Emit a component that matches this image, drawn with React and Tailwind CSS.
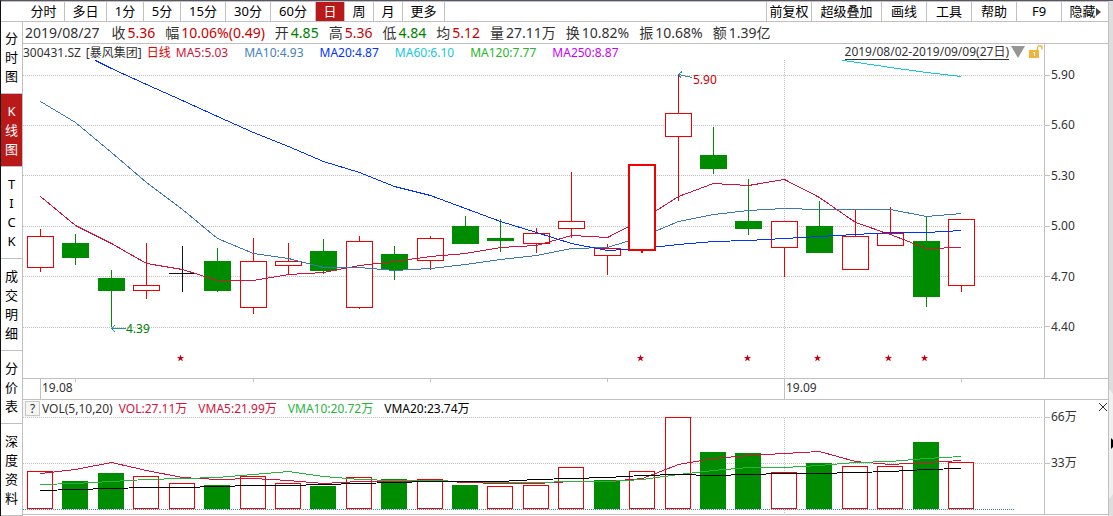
import clsx from 'clsx'

const periods = [
  { label: '分时', width: 'w-[42px]' },
  { label: '多日', width: 'w-[42px]' },
  { label: '1分', width: 'w-[37px]' },
  { label: '5分', width: 'w-[37px]' },
  { label: '15分', width: 'w-[45px]' },
  { label: '30分', width: 'w-[45px]' },
  { label: '60分', width: 'w-[45px]' },
  { label: '日', width: 'w-[29px]', active: true },
  { label: '周', width: 'w-[29px]' },
  { label: '月', width: 'w-[29px]' },
  { label: '更多', width: 'w-[42px]' },
]

const tools = [
  { label: '前复权', width: 'w-[45px]' },
  { label: '超级叠加', width: 'w-[70px]' },
  { label: '画线', width: 'w-[45px]' },
  { label: '工具', width: 'w-[45px]' },
  { label: '帮助', width: 'w-[45px]' },
  { label: 'F9', width: 'w-[45px]' },
  { label: '隐藏', width: 'w-[46px]', arrow: true },
]

const sideTabs = [
  { label: '分时图' },
  { label: 'K线图', active: true },
  { label: 'TICK' },
  { label: '成交明细' },
  { label: '分价表' },
  { label: '深度资料' },
]

const quote = [
  { label: '收', value: '5.36', color: 'text-[#c80000]' },
  { label: '幅', value: '10.06%(0.49)', color: 'text-[#c80000]' },
  { label: '开', value: '4.85', color: 'text-[#008000]' },
  { label: '高', value: '5.36', color: 'text-[#c80000]' },
  { label: '低', value: '4.84', color: 'text-[#008000]' },
  { label: '均', value: '5.12', color: 'text-[#c80000]' },
  { label: '量', value: '27.11万', color: 'text-[#333333]' },
  { label: '换', value: '10.82%', color: 'text-[#333333]' },
  { label: '振', value: '10.68%', color: 'text-[#333333]' },
  { label: '额', value: '1.39亿', color: 'text-[#333333]' },
]

const averages = [
  { label: 'MA5:5.03', color: 'text-[#d2143c]' },
  { label: 'MA10:4.93', color: 'text-[#4682b4]' },
  { label: 'MA20:4.87', color: 'text-[#0032ff]' },
  { label: 'MA60:6.10', color: 'text-[#14c8dc]' },
  { label: 'MA120:7.77', color: 'text-[#28b428]' },
  { label: 'MA250:8.87', color: 'text-[#c800ff]' },
]

const volumeAverages = [
  { label: 'VOL:27.11万', color: 'text-[#d2143c]' },
  { label: 'VMA5:21.99万', color: 'text-[#d2143c]' },
  { label: 'VMA10:20.72万', color: 'text-[#28b43c]' },
  { label: 'VMA20:23.74万', color: 'text-black' },
]

// [direction, high, body top, body bottom, low, volume top, volume direction if it differs]
const candles = [
  ['up', 229, 236, 268, 272, 471],
  ['down', 234, 243, 258, 265, 481],
  ['down', 270, 278, 291, 327, 473],
  ['up', 243, 285, 291, 299, 476],
  ['flat', 246, 273, 274, 292, 483],
  ['down', 248, 261, 291, 292, 485],
  ['up', 238, 261, 308, 314, 476],
  ['up', 243, 261, 266, 274, 483],
  ['down', 239, 251, 271, 274, 486],
  ['up', 236, 241, 308, 309, 477],
  ['down', 246, 254, 270, 280, 479],
  ['up', 236, 238, 261, 270, 479],
  ['down', 216, 226, 244, 244, 485],
  ['down', 219, 238, 241, 252, 486, 'up'],
  ['up', 228, 233, 244, 253, 485],
  ['up', 172, 221, 229, 238, 467],
  ['up', 244, 248, 256, 275, 480, 'down'],
  ['selected', 164, 164, 251, 253, 471],
  ['up', 75, 113, 137, 201, 417],
  ['down', 127, 155, 169, 174, 452],
  ['down', 179, 221, 229, 235, 453],
  ['up', 221, 221, 248, 277, 472],
  ['down', 201, 226, 253, 253, 463],
  ['up', 210, 236, 270, 270, 466],
  ['up', 207, 233, 246, 246, 466],
  ['down', 217, 241, 297, 307, 442],
  ['up', 219, 219, 286, 292, 462],
]

const dayX = (i) => Math.round(40 + i * 35.42)

const ma5 = [196, 225, 243, 263, 269, 280, 280, 274, 272, 265, 261, 256, 253, 247, 245, 235, 237, 219, 196, 183, 185, 179, 197, 222, 234, 248, 247]
const ma10 = [101, 122, 152, 182, 209, 238, 253, 258, 267, 267, 270, 268, 264, 259, 255, 248, 247, 236, 221, 214, 210, 208, 209, 209, 209, 216, 213]
const ma20 = [68, 84, 100, 116, 132, 146, 161, 172, 186, 195, 208, 221, 232, 243, 250, 248, 244, 241, 240, 238, 236, 234, 232, 232, 230]
const vma5 = [473, 469, 462, 470, 477, 479, 478, 480, 483, 481, 481, 480, 482, 483, 483, 481, 481, 478, 464, 458, 455, 453, 451, 461, 464, 462, 460]
const vma10 = [484, 483, 481, 479, 478, 477, 474, 471, 476, 479, 480, 480, 481, 482, 482, 481, 481, 479, 474, 470, 467, 467, 465, 462, 461, 458, 456]
const vma20 = [490, 489, 488, 487, 487, 486, 485, 485, 484, 483, 482, 481, 481, 481, 479, 478, 477, 475, 474, 475, 474, 473, 473, 472, 471, 469, 468]

const series = (values, first = 0) =>
  values.map((y, i) => `${dayX(i + first) + 0.5},${y + 0.5}`).join(' ')

const priceTicks = ['5.90', '5.60', '5.30', '5.00', '4.70', '4.40']
const priceGrid = [75, 125, 175, 226, 276, 327]
const stars = [180, 640, 747, 817, 888, 924]

function Candle({ x, data }) {
  const [kind, high, top, bottom, low] = data
  if (kind === 'flat') {
    return (
      <g fill="#111111">
        <rect x={x} y={high} width="1" height={low - high} />
        <rect x={x - 13} y={top} width="27" height="1" />
      </g>
    )
  }
  if (kind === 'down') {
    return (
      <g fill="#008c00">
        <rect x={x} y={high} width="1" height={low - high} />
        <rect x={x - 13} y={top} width="27" height={bottom - top} />
      </g>
    )
  }
  if (kind === 'selected') {
    return (
      <g>
        <rect x={x - 1} y={high} width="2" height={low - high} fill="#f00000" />
        <rect x={x - 13} y={top + 1} width="26" height={bottom - top - 2} fill="#ffffff" stroke="#f00000" strokeWidth="2" />
      </g>
    )
  }
  return (
    <g>
      <rect x={x} y={high} width="1" height={low - high} fill="#f00000" />
      <rect x={x - 12.5} y={top + 0.5} width="26" height={bottom - top - 1} fill="#ffffff" stroke="#f00000" />
    </g>
  )
}

function PriceChart() {
  return (
    <svg
      viewBox="23 60 1021 318"
      preserveAspectRatio="none"
      shapeRendering="crispEdges"
      className="block h-[318px] w-full"
      role="img"
      aria-label="日线"
    >
      <g stroke="#c0c0c0" strokeDasharray="1 1">
        {priceGrid.map((y) => (
          <line key={y} x1="23" x2="1042" y1={y + 0.5} y2={y + 0.5} />
        ))}
        <line x1="784.5" x2="784.5" y1="60" y2="378" />
      </g>
      {candles.map((data, i) => data[0] !== 'selected' && <Candle key={i} x={dayX(i)} data={data} />)}
      <g fill="none">
        <polyline points={series(ma5)} stroke="#d2143c" />
        <polyline points={series(ma10)} stroke="#3c78b4" />
        <polyline points={`95.5,60.5 ${series(ma20, 2)}`} stroke="#0032ff" />
        <polyline points="842.5,60.5 850.5,61.5 890.5,67.5 926.5,72.5 961.5,76.5" stroke="#14c8dc" />
      </g>
      <Candle x={642} data={candles[17]} />
      <g fill="none" stroke="#288caa">
        <path d="M692 77.5L678.5 74.5M682 71.5L678.5 74.5L681.5 78.5" />
        <path d="M126 328.5H111.5M115 325L111.5 328.5L115 332" />
      </g>
      <text x="693" y="84" fontSize="12" fill="#c80000">5.90</text>
      <text x="126" y="333" fontSize="12" fill="#008000">4.39</text>
      {stars.map((x) => (
        <polygon
          key={x}
          points="0,-3.6 .9,-1.1 3.6,-1.1 1.5,.6 2.3,3.2 0,1.7 -2.3,3.2 -1.5,.6 -3.6,-1.1 -.9,-1.1"
          transform={`translate(${x + 0.5} 358)`}
          fill="#c80014"
          shapeRendering="auto"
        />
      ))}
    </svg>
  )
}

function TimeAxis() {
  return (
    <svg
      viewBox="23 379 1021 20"
      preserveAspectRatio="none"
      shapeRendering="crispEdges"
      className="block h-5 min-w-0 flex-1"
      role="img"
      aria-label="日期"
    >
      <path d="M40.5 379V399M784.5 379V399M75.5 379V382M253.5 379V382M430.5 379V382M607.5 379V382M961.5 379V382" stroke="#c0c0c0" />
      <text x="42" y="392" fontSize="12" fill="#333333">19.08</text>
      <text x="786" y="392" fontSize="12" fill="#333333">19.09</text>
    </svg>
  )
}

function VolumeChart() {
  return (
    <svg
      viewBox="23 417 1021 97"
      preserveAspectRatio="none"
      shapeRendering="crispEdges"
      className="block h-[97px] w-full"
      role="img"
      aria-label="VOL"
    >
      <g stroke="#c0c0c0" strokeDasharray="1 1">
        <line x1="23" x2="1042" y1="417.5" y2="417.5" />
        <line x1="23" x2="1042" y1="463.5" y2="463.5" />
        <line x1="784.5" x2="784.5" y1="418" y2="514" />
        <line x1="23" x2="1014" y1="509.5" y2="509.5" stroke="#3c8ca0" />
      </g>
      {candles.map((data, i) => {
        const x = dayX(i) - 13
        const top = data[5]
        const down = (data[6] || data[0]) === 'down'
        return down ? (
          <rect key={i} x={x} y={top} width="26" height={509 - top} fill="#008c00" />
        ) : (
          <rect key={i} x={x + 0.5} y={top + 0.5} width="25" height={508 - top} fill="#ffffff" stroke="#f00000" />
        )
      })}
      <g fill="none">
        <polyline points={series(vma5)} stroke="#d2143c" />
        <polyline points={series(vma10)} stroke="#28b43c" />
        <polyline points={series(vma20)} stroke="#000000" />
      </g>
    </svg>
  )
}

function Toolbar() {
  return (
    <div className="flex h-[21px] justify-between border-y border-[#c0c0c0] pl-[22px] text-[13px]">
      <div className="flex">
        {periods.map((item) => (
          <button
            key={item.label}
            type="button"
            className={clsx(
              'border-r border-[#c0c0c0] text-center leading-[19px] whitespace-nowrap',
              item.width,
              item.active ? 'bg-[#b91919] text-white' : 'text-black',
            )}
          >
            {item.label}
          </button>
        ))}
      </div>
      <div className="flex border-l border-[#c0c0c0]">
        {tools.map((item) => (
          <button
            key={item.label}
            type="button"
            className={clsx('flex items-center justify-center border-r border-[#c0c0c0] leading-[19px] whitespace-nowrap text-black last:border-r-0', item.width)}
          >
            {item.label}
            {item.arrow && (
              <svg viewBox="0 0 5 8" className="h-2 w-[5px] shrink-0">
                <path d="M0 0L5 4L0 8Z" fill="#444444" />
              </svg>
            )}
          </button>
        ))}
      </div>
    </div>
  )
}

function SideTabs() {
  return (
    <nav className="w-[22px] shrink-0 border-r border-[#c0c0c0]">
      {sideTabs.map((tab) => (
        <button
          key={tab.label}
          type="button"
          className={clsx(
            'flex w-full flex-col items-center border-b border-[#c0c0c0] pt-2 pb-[7px] text-[13px] leading-[19px] first:pt-[7px]',
            tab.active ? 'bg-[#b91919] text-white' : 'text-black',
          )}
        >
          {[...tab.label].map((char) => (
            <span key={char}>{char}</span>
          ))}
        </button>
      ))}
    </nav>
  )
}

function QuoteBar() {
  return (
    <div className="flex h-[22px] items-center gap-3 border-b border-[#c0c0c0] pl-[2px] text-sm leading-5 whitespace-nowrap text-[#333333]">
      <span>2019/08/27</span>
      <div className="flex gap-[10px]">
        {quote.map((item) => (
          <span key={item.label} className="flex gap-[2px]">
            <span>{item.label}</span>
            <span className={item.color}>{item.value}</span>
          </span>
        ))}
      </div>
    </div>
  )
}

export default function App() {
  return (
    <div className="flex w-full border-t border-l border-t-[#5a5564] border-l-[#111111] bg-white font-['Noto_Sans','Noto_Sans_CJK_SC',sans-serif] text-[#333333]">
      <div className="min-w-0 flex-1">
        <Toolbar />
        <div className="flex">
          <SideTabs />
          <main className="min-w-0 flex-1">
            <QuoteBar />

            <section className="flex text-xs">
              <div className="min-w-0 flex-1">
                <div className="flex h-4 justify-between pt-px leading-4 whitespace-nowrap">
                  <div className="flex gap-[5px]">
                    <span>300431.SZ</span>
                    <span>[暴风集团]</span>
                    <span className="text-[#e60000]">日线</span>
                    <span className="flex gap-4">
                      {averages.map((item) => (
                        <span key={item.label} className={item.color}>{item.label}</span>
                      ))}
                    </span>
                  </div>
                  <div className="flex items-start gap-[2px]">
                    <a href="#range" className="block border-b border-[#333333] leading-[14px]">2019/08/02-2019/09/09(27日)</a>
                    <svg viewBox="0 0 14 12" className="mt-px h-3 w-[14px]">
                      <path d="M0 0H14L7 12Z" fill="#969696" />
                    </svg>
                    <svg viewBox="0 0 17 14" className="h-[14px] w-[17px]">
                      <path d="M10.5 5V3a2.3 2.3 0 0 1 4.6 0V4.5" fill="none" stroke="#f0b43c" strokeWidth="1.4" />
                      <rect x="2" y="5" width="10" height="8" fill="#f0b43c" />
                      <path d="M6 7H8V11H7V8H6Z" fill="#ffffff" />
                    </svg>
                  </div>
                </div>
                <PriceChart />
              </div>
              <div className="w-16 shrink-0 border-l border-[#c0c0c0] pt-[23px] leading-4">
                <ul className="flex h-[268px] flex-col justify-between">
                  {priceTicks.map((tick) => (
                    <li key={tick} className="flex items-center gap-px">
                      <span className="h-px w-[5px] bg-[#c0c0c0]" />
                      {tick}
                    </li>
                  ))}
                </ul>
              </div>
            </section>

            <div className="flex border-y border-[#c0c0c0]">
              <TimeAxis />
              <div className="w-16 shrink-0" />
            </div>

            <section className="flex border-b border-[#c0c0c0] text-xs">
              <div className="min-w-0 flex-1">
                <div className="flex h-[17px] gap-[2px] pt-px leading-4 whitespace-nowrap">
                  <div className="bg-[#f5f5f5] pl-[2px]">
                    <button type="button" className="block h-[15px] w-[15px] border border-[#c8c8c8] text-center leading-[13px]">?</button>
                  </div>
                  <div className="flex gap-[6px]">
                    <span>VOL(5,10,20)</span>
                    <span className="flex gap-[11px]">
                      {volumeAverages.map((item) => (
                        <span key={item.label} className={item.color}>{item.label}</span>
                      ))}
                    </span>
                  </div>
                </div>
                <VolumeChart />
              </div>
              <div className="flex w-16 shrink-0 justify-between border-l border-[#c0c0c0] leading-4">
                <ul className="flex flex-col gap-[30px] pt-[9px]">
                  {['66万', '33万'].map((tick) => (
                    <li key={tick} className="flex items-center gap-px">
                      <span className="h-px w-[5px] bg-[#c0c0c0]" />
                      {tick}
                    </li>
                  ))}
                </ul>
                <button type="button" aria-label="关闭" className="mt-[3px] h-2 w-[9px]">
                  <svg viewBox="0 0 8 8" className="h-2 w-2">
                    <path d="M0 0L8 8M8 0L0 8" stroke="#333333" />
                  </svg>
                </button>
              </div>
            </section>
          </main>
        </div>
      </div>
      <aside className="flex w-[5px] shrink-0 flex-col border-l border-[#c0c0c0] bg-[#dedede] pt-[388px]">
        <svg viewBox="0 0 4 110" className="h-[110px] w-1">
          <path d="M0 0L4 5V105L0 110Z" fill="#f0f0f0" />
          <path d="M2 49L4 51V58L2 60Z" fill="#000000" />
        </svg>
      </aside>
    </div>
  )
}
